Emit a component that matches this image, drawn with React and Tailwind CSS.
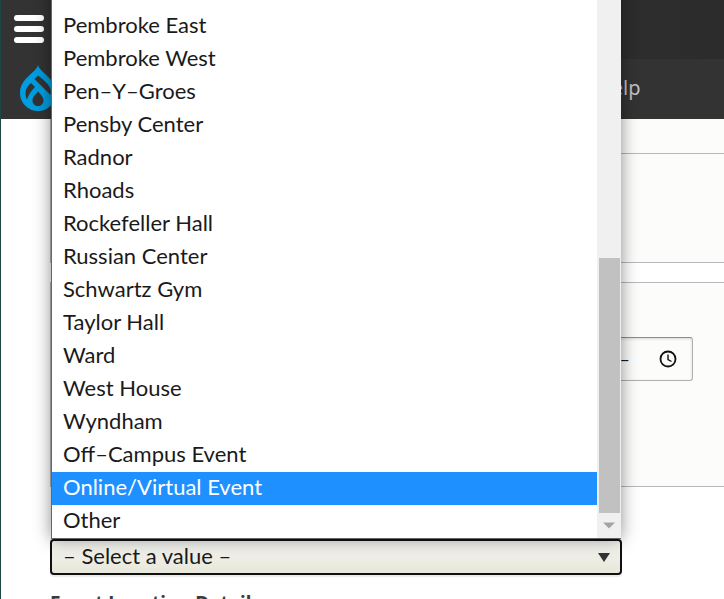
import React from "react";

const locations = [
  "Pembroke East",
  "Pembroke West",
  "Pen-Y-Groes",
  "Pensby Center",
  "Radnor",
  "Rhoads",
  "Rockefeller Hall",
  "Russian Center",
  "Schwartz Gym",
  "Taylor Hall",
  "Ward",
  "West House",
  "Wyndham",
  "Off-Campus Event",
  "Online/Virtual Event",
  "Other",
];

function DrupalIcon() {
  return (
    <svg viewBox="0 0 36 46" className="h-[46px] w-9" aria-hidden="true">
      <path
        fill="#009cde"
        fillRule="evenodd"
        d="M18 0C20 8 36 13 36 28A18 18 0 0 1 0 28C0 13 16 8 18 0Z
           M11 18C7.500 21 5.500 24 5.500 28C5.500 30.500 6 32.500 7 34.500C8.500 29.500 11.500 25.500 15 22Z
           M18 10.500L14.500 14L30.500 30C33 22 25 16 18 10.500Z
           M18 26.500C15.500 29.500 12.500 32 12.500 35.500C12.500 39 15 41 18 41C21 41 23.500 39 23.500 35.500C23.500 32 20.500 29.500 18 26.500Z"
      />
    </svg>
  );
}

function Header() {
  return (
    <header className="text-white">
      <div className="flex h-[59px] items-center bg-gradient-to-r from-[#333333] to-[#2c2c2c] pb-px pl-[13px]">
        <button aria-label="Menu" className="flex w-[30px] flex-col gap-[5px]">
          <span className="h-1.5 w-full rounded-full bg-white" />
          <span className="h-1.5 w-full rounded-full bg-white" />
          <span className="h-1.5 w-full rounded-full bg-white" />
        </button>
      </div>
      <nav className="flex h-[60px] items-center bg-[#333333] pb-0.5 pl-[19px]">
        <a href="#home" aria-label="Home">
          <DrupalIcon />
        </a>
        <a
          href="#help"
          className="ml-[541px] font-['Noto_Sans',sans-serif] text-xl text-[#c0c0c0]"
        >
          Help
        </a>
      </nav>
    </header>
  );
}

function LocationMenu() {
  return (
    <div className="absolute right-px bottom-full left-px z-10 flex border-b border-l border-[#666666] bg-white shadow-[0_0_16px_rgba(0,0,0,0.45)]">
      <ul role="listbox" aria-label="Locations" className="flex-1 pt-[60px]">
        {locations.map((name) => (
          <li
            key={name}
            role="option"
            aria-selected={name === "Online/Virtual Event"}
            className="h-[33px] pl-[11px] leading-[30px] aria-selected:bg-[#1e90ff] aria-selected:text-white"
          >
            {name.replaceAll("-", "–")}
          </li>
        ))}
      </ul>
      <div className="flex w-6 flex-col items-center justify-end bg-[#f0f0f0]">
        <div className="h-[255px] w-[21px] bg-[#c1c1c1]" />
        <svg viewBox="0 0 12 6" className="my-[9px] h-[7px] w-3" aria-hidden="true">
          <path d="M0 0H12L6 6Z" fill="#a3a3a3" />
        </svg>
      </div>
    </div>
  );
}

export default function App() {
  return (
    <div className="h-screen overflow-hidden border-l border-[#1d4648] bg-white font-['Lato',sans-serif] text-[22px] text-[#1a1a1a]">
      <Header />
      <main className="pl-[49px]">
        <fieldset className="h-36 border-b border-l border-[#b8b8b8] bg-[#fcfcfa] pt-[34px]">
          <hr className="border-[#b8b8b8]" />
        </fieldset>
        <fieldset className="mt-[19px] h-[205px] border border-r-0 border-[#b8b8b8] bg-[#fcfcfa] pt-[54px]">
          <div className="relative ml-[470px] w-[172px]">
            <input
              type="text"
              aria-label="Time"
              defaultValue="–"
              className="h-11 w-full rounded-[3px] border border-[#b0b0b0] border-t-[#8c8c8c] pr-[62px] text-right text-lg shadow-[inset_0_1px_3px_rgba(0,0,0,0.15)]"
            />
            <svg
              viewBox="0 0 18 18"
              className="absolute top-[13px] right-4 size-[18px]"
              fill="none"
              stroke="#111111"
              aria-hidden="true"
            >
              <circle cx="9" cy="9" r="7.5" strokeWidth="1.8" />
              <path d="M9 4.5V9.5L12.5 11.5" strokeWidth="1.4" />
            </svg>
          </div>
        </fieldset>
        <div className="relative mt-[52px] max-w-[572px]">
          <LocationMenu />
          <select
            aria-label="Event Location"
            className="block h-9 w-full appearance-none rounded-[4px] border-2 border-[#111111] bg-gradient-to-b from-[#f6f6f2] to-[#e7e7db] pb-0.5 pl-[11px] leading-[26px] shadow-[0_2px_1px_rgba(0,0,0,0.08)]"
          >
            <option>– Select a value –</option>
            {locations.map((name) => (
              <option key={name}>{name}</option>
            ))}
          </select>
          <svg
            viewBox="0 0 12 9"
            className="pointer-events-none absolute top-[14px] right-3 h-[9px] w-3"
            aria-hidden="true"
          >
            <path d="M0 0H12L6 9Z" fill="#333333" />
          </svg>
        </div>
        <label
          htmlFor="location-details"
          className="mt-[14px] block font-['Noto_Sans',sans-serif] text-[19px] leading-7 font-bold text-[#3b3b3b]"
        >
          Event Location Details
        </label>
        <input id="location-details" type="text" className="h-11 w-full max-w-[572px] border border-[#b8b8b8]" />
      </main>
    </div>
  );
}
